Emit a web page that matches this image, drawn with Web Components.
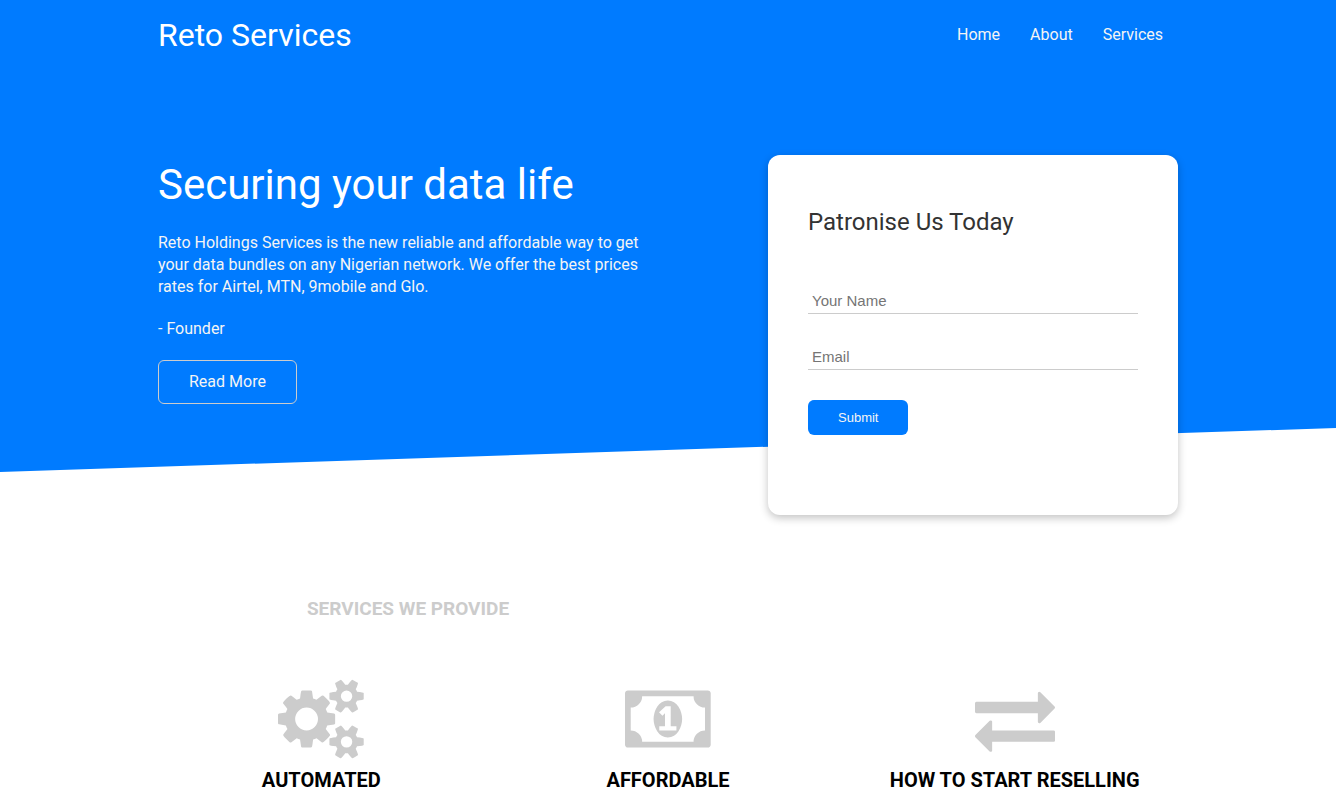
<!DOCTYPE html>
<html lang="en">
<head>
<meta charset="utf-8">
<meta name="viewport" content="width=device-width, initial-scale=1">
<title>Reto Services</title>
<style>
  :root { --brand: #007bff; --light: #f4f4f4; --muted: #ccc; --ink: #333; }
  body { margin: 0; background: #fff; color: #000; font: 16px/22px Roboto, "Liberation Sans", sans-serif; }
</style>
</head>
<body>
<site-hero>
  <site-header slot="header" brand="Reto Services">
    <nav-link href="#home">Home</nav-link>
    <nav-link href="#about">About</nav-link>
    <nav-link href="#services">Services</nav-link>
  </site-header>
  <hero-intro heading="Securing your data life" action="Read More" href="#about">
    <p>Reto Holdings Services is the new reliable and affordable way to get your data bundles on any Nigerian network. We offer the best prices rates for Airtel, MTN, 9mobile and Glo.</p>
    <p>- Founder</p>
  </hero-intro>
  <contact-card heading="Patronise Us Today"></contact-card>
</site-hero>
<service-list id="services" heading="SERVICES WE PROVIDE">
  <service-item icon="cogs">AUTOMATED</service-item>
  <service-item icon="money">AFFORDABLE</service-item>
  <service-item icon="exchange">HOW TO START RESELLING</service-item>
</service-list>

<script>
class BaseElement extends HTMLElement {
  connectedCallback() {
    if (this.shadowRoot) return;
    this.attachShadow({ mode: 'open' }).innerHTML =
      '<style>:host,*{box-sizing:border-box}' + this.css() + '</style>' + this.html();
  }
  attr(name) { return this.getAttribute(name) || ''; }
}

customElements.define('site-hero', class extends BaseElement {
  css() { return `
    :host { display: block; position: relative; }
    /* slanted backdrop behind the header and the two columns */
    :host::before { content: ""; position: absolute; inset: 0 0 43px; z-index: -1;
      background: var(--brand); clip-path: polygon(0 0, 100% 0, 100% calc(100% - 44px), 0 100%); }
    .columns { display: grid; grid-template-columns: minmax(0, 500px) minmax(0, 410px);
      justify-content: space-between; align-items: start; gap: 20px;
      max-width: 1020px; margin: 0 auto; padding-top: 85px; }
    @media (max-width: 1060px) { .columns { padding-left: 20px; padding-right: 20px; } }
    @media (max-width: 760px) { .columns { grid-template-columns: 1fr; padding-top: 40px; } }`; }
  html() { return `<slot name="header"></slot><main class="columns"><slot></slot></main>`; }
});

customElements.define('site-header', class extends BaseElement {
  css() { return `
    :host { display: block; color: var(--light); }
    header { display: flex; flex-wrap: wrap; align-items: center; justify-content: space-between;
      max-width: 1020px; min-height: 70px; margin: 0 auto; }
    a { color: #fff; font-size: 32px; line-height: 44px; text-decoration: none; }
    nav { display: flex; }
    @media (max-width: 1060px) { header { padding: 0 20px; } }`; }
  html() { return `<header><a href="#home">${this.attr('brand')}</a><nav><slot></slot></nav></header>`; }
});

customElements.define('nav-link', class extends BaseElement {
  css() { return `
    :host { display: block; }
    a { display: block; padding: 8px 15px; color: var(--light); text-decoration: none; }
    a:hover { text-decoration: underline; }`; }
  html() { return `<a href="${this.attr('href')}"><slot></slot></a>`; }
});

customElements.define('hero-intro', class extends BaseElement {
  css() { return `
    :host { display: block; color: var(--light); }
    h1 { margin: 0 0 17px; color: #fff; font-size: 42px; font-weight: 400; line-height: 60px; }
    ::slotted(p) { margin: 0 0 20px; }
    a { display: inline-block; padding: 10px 30px; border: 1px solid var(--muted); border-radius: 6px;
      color: inherit; text-decoration: none; }`; }
  html() { return `<h1>${this.attr('heading')}</h1><slot></slot><a href="${this.attr('href')}">${this.attr('action')}</a>`; }
});

customElements.define('contact-card', class extends BaseElement {
  css() { return `
    :host { display: block; min-height: 360px; padding: 50px 40px 80px; background: #fff; color: var(--ink);
      border-radius: 12px; box-shadow: 0 3px 8px rgba(0, 0, 0, .24); }
    h2 { margin: 0 0 49px; font-size: 24px; font-weight: 400; line-height: 34px; }
    input { display: block; width: 100%; height: 26px; margin: 0 0 30px; padding: 4px; border: 0;
      border-bottom: 1px solid var(--muted); background: none; color: var(--ink);
      font: 15px/17px "Liberation Sans", sans-serif; outline: none; }
    input::placeholder { color: #757575; }
    button { display: block; padding: 10px 30px; border: 0; border-radius: 6px; background: var(--brand);
      color: var(--light); font: 13px/15px "Liberation Sans", sans-serif; cursor: pointer; }`; }
  html() { return `<h2>${this.attr('heading')}</h2>
    <form>
      <input type="text" name="name" placeholder="Your Name" aria-label="Your Name">
      <input type="email" name="email" placeholder="Email" aria-label="Email">
      <button type="submit">Submit</button>
    </form>`; }
});

customElements.define('service-list', class extends BaseElement {
  css() { return `
    :host { display: block; max-width: 1020px; margin: 0 auto; padding: 80px 0 0; }
    h2 { max-width: 500px; margin: 0 0 56px; color: var(--muted); font-size: 19px; font-weight: 700;
      line-height: 28px; text-align: center; }
    .grid { display: grid; grid-template-columns: repeat(3, minmax(0, 1fr)); gap: 20px; }
    @media (max-width: 760px) { .grid { grid-template-columns: 1fr; } }`; }
  html() { return `<h2>${this.attr('heading')}</h2><div class="grid"><slot></slot></div>`; }
});

const ICONS = {
  cogs: [1920, 'M896 896q0-106-75-181t-181-75-181 75-75 181 75 181 181 75 181-75 75-181zm768 512q0-52-38-90t-90-38-90 38-38 90q0 53 37.5 90.5t90.5 37.5 90.5-37.5 37.5-90.5zm0-1024q0-52-38-90t-90-38-90 38-38 90q0 53 37.5 90.5t90.5 37.5 90.5-37.5 37.5-90.5zm-384 421v185q0 10-7 19.5t-16 10.5l-155 24q-11 35-32 76 34 48 90 115 7 11 7 20 0 12-7 19-23 30-82.5 89.5t-78.5 59.5q-11 0-21-7l-115-90q-37 19-77 31-11 108-23 155-7 24-30 24h-186q-11 0-20-7.5t-10-17.5l-23-153q-34-10-75-31l-118 89q-7 7-20 7-11 0-21-8-144-133-144-160 0-9 7-19 10-14 41-53t47-61q-23-44-35-82l-152-24q-10-1-17-9.5t-7-19.5v-185q0-10 7-19.5t16-10.5l155-24q11-35 32-76-34-48-90-115-7-11-7-20 0-12 7-20 22-30 82-89t79-59q11 0 21 7l115 90q34-18 77-32 11-108 23-154 7-24 30-24h186q11 0 20 7.5t10 17.5l23 153q34 10 75 31l118-89q8-7 20-7 11 0 21 8 144 133 144 160 0 8-7 19-12 16-42 54t-45 60q23 48 34 82l152 23q10 2 17 10.5t7 19.5zm640 533v140q0 16-149 31-12 27-30 52 51 113 51 138 0 4-4 7-122 71-124 71-8 0-46-47t-52-68q-20 2-30 2t-30-2q-14 21-52 68t-46 47q-2 0-124-71-4-3-4-7 0-25 51-138-18-25-30-52-149-15-149-31v-140q0-16 149-31 13-29 30-52-51-113-51-138 0-4 4-7 4-2 35-20t59-34 30-16q8 0 46 46.5t52 67.5q20-2 30-2t30 2q51-71 92-112l6-2q4 0 124 70 4 3 4 7 0 25-51 138 17 23 30 52 149 15 149 31zm0-1024v140q0 16-149 31-12 27-30 52 51 113 51 138 0 4-4 7-122 71-124 71-8 0-46-47t-52-68q-20 2-30 2t-30-2q-14 21-52 68t-46 47q-2 0-124-71-4-3-4-7 0-25 51-138-18-25-30-52-149-15-149-31v-140q0-16 149-31 13-29 30-52-51-113-51-138 0-4 4-7 4-2 35-20t59-34 30-16q8 0 46 46.5t52 67.5q20-2 30-2t30 2q51-71 92-112l6-2q4 0 124 70 4 3 4 7 0 25-51 138 17 23 30 52 149 15 149 31z'],
  money: [1920, 'M768 1152h384v-96h-128v-448h-114l-148 137 77 80q42-37 55-57h2v288h-128v96zm512-256q0 70-21 142t-59.5 134-101.5 101-138 39-138-39-101.5-101-59.5-134-21-142 21-142 59.5-134 101.5-101 138-39 138 39 101.5 101 59.5 134 21 142zm512 256v-512q-106 0-181-75t-75-181h-1152q0 106-75 181t-181 75v512q106 0 181 75t75 181h1152q0-106 75-181t181-75zm128-832v1152q0 26-19 45t-45 19h-1792q-26 0-45-19t-19-45v-1152q0-26 19-45t45-19h1792q26 0 45 19t19 45z'],
  exchange: [1792, 'M1792 1184v192q0 13-9.5 22.5t-22.5 9.5h-1376v192q0 13-9.5 22.5t-22.5 9.5q-12 0-24-10l-319-320q-9-9-9-22 0-14 9-23l320-320q9-9 23-9 13 0 22.5 9.5t9.5 22.5v192h1376q13 0 22.5 9.5t9.5 22.5zm0-544q0 14-9 23l-320 320q-9 9-23 9-13 0-22.5-9.5t-9.5-22.5v-192h-1376q-13 0-22.5-9.5t-9.5-22.5v-192q0-13 9.5-22.5t22.5-9.5h1376v-192q0-14 9-23t23-9q12 0 24 10l319 319q9 9 9 23z']
};

customElements.define('service-item', class extends BaseElement {
  css() { return `
    :host { display: block; text-align: center; }
    svg { display: block; height: 80px; margin: 0 auto 7px; fill: var(--muted); overflow: visible; }
    h3 { margin: 0; font-size: 20px; font-weight: 700; line-height: 28px; }`; }
  html() {
    const [width, path] = ICONS[this.attr('icon')];
    return `<svg viewBox="0 0 ${width} 1792" fill-rule="evenodd" aria-hidden="true"><path d="${path}"/></svg><h3><slot></slot></h3>`;
  }
});
</script>
</body>
</html>
